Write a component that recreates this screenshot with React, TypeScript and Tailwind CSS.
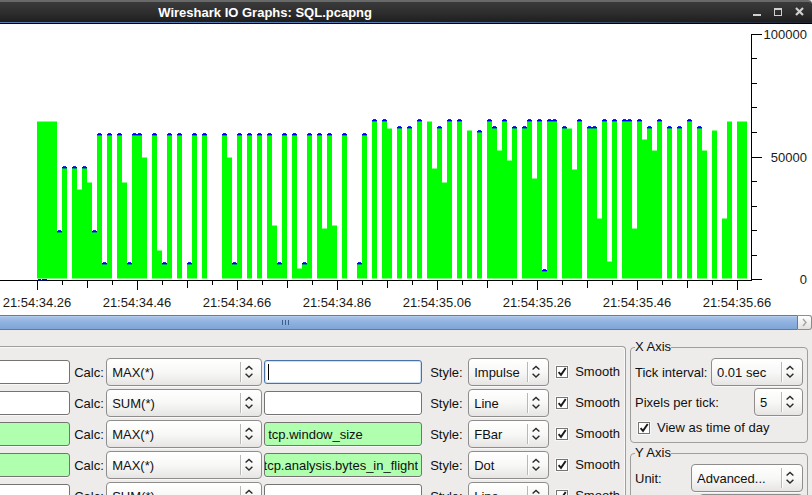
import React, { useId } from "react";

type Sample = { slot: number; top: number; dot: boolean };

// One entry per tick: "-" is an empty tick, a trailing "d" marks a bytes-in-flight dot.
const SERIES =
  "121 121 121 121 231d 167d - 167d 189 167d 182 231d 134d 263d 134d - 134d 182 263d 134d 134d 157 - 134d 250 263d 134d - 134d - 263d 134d - 134d - - - " +
  "134d 157 263d 134d - 134d - 134d - 134d 225 263d 134d - 134d 268 263d 134d - 134d 228 134d 225 - 134d - - 263d 134d - 120d - 120d 128 - 127d - 127d - " +
  "120d - 121 168 127d 182 120d - 120d - 130 - 131d - 120d 127d 150 120d 160 127d - 127d 120d 178 120d 270d 120d 120d - 127d 128 169 120d - 127d 127d 218 " +
  "120d 261 120d - 120d 120d 228 120d 139 127d 150 120d - 127d - 127d - 120d - 127d 150 - 130 - 218 121 - 121 121";

const samples: Sample[] = SERIES.split(" ")
  .map((s, slot) => ({ slot, top: parseInt(s, 10), dot: s.endsWith("d") }))
  .filter((s) => !Number.isNaN(s.top));

const timeLabels = ["34.26", "34.46", "34.66", "34.86", "35.06", "35.26", "35.46", "35.66"];
const xTicks = Array.from({ length: 29 }, (_, i) => i);
const yTicks = [34, 58, 83, 107, 132, 157, 181, 206, 230, 255, 279];

function Graph() {
  return (
    <div className="flex h-[291px] shrink-0 justify-end overflow-hidden bg-white">
      <svg
        width="812"
        height="291"
        viewBox="0 24 812 291"
        className="shrink-0 font-['Liberation_Sans',Arial,sans-serif] text-[13px]"
        shapeRendering="crispEdges"
        role="img"
        aria-label="IO graph"
      >
        {samples.map(({ slot, top, dot }) => {
          const x = 37 + slot * 5;
          return (
            <g key={slot}>
              <rect x={x} y={top} width="5" height={279 - top} fill={dot ? "#00ff00" : "#80ff80"} />
              <rect x={x} y={top + 1} width="5" height={277 - top} fill="#00ff00" />
              <rect x={x} y="278" width="5" height="1" fill="#80ff80" />
              {dot && (
                <>
                  <rect x={x + 1} y={top - 1} width="3" height="1" fill="#2020ff" />
                  <rect x={x} y={top} width="5" height="1" fill="#0000ff" />
                  <rect x={x} y={top + 1} width="5" height="1" fill="#00996a" />
                </>
              )}
            </g>
          );
        })}
        <rect x="0" y="280" width="752" height="1" fill="#000" />
        <rect x="38" y="279" width="3" height="1" fill="#0000ff" />
        <rect x="42" y="279" width="5" height="1" fill="#0000ff" />
        <rect x="38" y="280" width="9" height="1" fill="#000080" />
        <rect x="751" y="34" width="1" height="247" fill="#000" />
        {xTicks.map((i) => (
          <rect key={i} x={37 + i * 25} y="281" width="1" height={i % 4 === 0 ? 9 : i % 2 === 0 ? 7 : 4} fill="#000" />
        ))}
        {yTicks.map((y, i) => (
          <rect key={y} x="751" y={y} width={i % 5 === 0 ? 11 : 6} height="1" fill="#000" />
        ))}
        {timeLabels.map((t, i) => (
          <text key={t} x={37 + i * 100} y="307" textAnchor="middle" fill="#1a1a1a">
            {"21:54:" + t}
          </text>
        ))}
        <text x="807" y="39" textAnchor="end" fill="#1a1a1a">100000</text>
        <text x="807" y="162" textAnchor="end" fill="#1a1a1a">50000</text>
        <text x="807" y="284" textAnchor="end" fill="#1a1a1a">0</text>
      </svg>
    </div>
  );
}

function Combo({ id, value, className, label }: { id?: string; value: string; className: string; label?: string }) {
  return (
    <div className={"relative h-7 shrink-0 " + className}>
      <select
        id={id}
        aria-label={label}
        defaultValue={value}
        className="h-full w-full appearance-none rounded-[4px] border border-[#8e8d8b] bg-linear-to-b from-white via-[#f8f8f7] to-[#e6e5e4] pt-px pl-[5px] text-[13px] text-[#101010] shadow-[0_1px_0_#f8f8f8] outline-none"
      >
        <option>{value}</option>
      </select>
      <svg className="pointer-events-none absolute top-0 right-0" width="24" height="28" viewBox="0 0 24 28" fill="none">
        <path d="M2.5 4v20" stroke="#b9b8b6" />
        <path d="M3.5 4v20" stroke="#ffffff" />
        <path d="M7.6 11.6 11 8.4l3.4 3.2M7.6 15.8 11 19l3.4-3.2" stroke="#2a2a2a" strokeWidth="1.4" />
      </svg>
    </div>
  );
}

function Check({ label }: { label: string }) {
  return (
    <label className="flex shrink-0 items-center gap-[7px] whitespace-nowrap">
      <span className="relative flex h-3 w-3">
        <input
          type="checkbox"
          defaultChecked
          className="h-3 w-3 appearance-none border border-[#757472] bg-white shadow-[0_0_0_1px_#f8f8f8]"
        />
        <svg className="pointer-events-none absolute inset-0" width="12" height="12" viewBox="0 0 12 12" fill="none">
          <path d="M2.6 6.2 5 8.9 9.7 2" stroke="#1a1a1a" strokeWidth="1.9" />
        </svg>
      </span>
      {label}
    </label>
  );
}

const fieldBase = "h-6 rounded-[3px] border text-[13px] text-[#101010] outline-none ";
const whiteField = "border-[#757472] bg-white shadow-[0_1px_0_#f8f8f8]";
const greenField = "border-[#757472] bg-[#afffaf] shadow-[0_1px_0_#f8f8f8]";
const activeField = "border-[#4a72a8] bg-white shadow-[inset_0_0_0_1px_#cfdff2]";

type Row = { calc: string; field: string; style: string; green?: boolean; active?: boolean; scrolled?: boolean };

const rows: Row[] = [
  { calc: "MAX(*)", field: "", style: "Impulse", active: true },
  { calc: "SUM(*)", field: "", style: "Line" },
  { calc: "MAX(*)", field: "tcp.window_size", style: "FBar", green: true },
  { calc: "MAX(*)", field: "tcp.analysis.bytes_in_flight", style: "Dot", green: true, scrolled: true },
  { calc: "SUM(*)", field: "", style: "Line" },
];

function GraphRow({ row }: { row: Row }) {
  const id = useId();
  const tone = row.green ? greenField : whiteField;
  return (
    <div className="flex h-7 shrink-0 items-center">
      <input aria-label="Filter" className={fieldBase + tone + " -ml-2 min-w-0 flex-1"} />
      <label htmlFor={id + "calc"} className="ml-1 w-8 shrink-0 pt-px">Calc:</label>
      <Combo id={id + "calc"} value={row.calc} className="w-[156px]" />
      <div className="relative ml-[2px] flex w-[158px] shrink-0">
        <input
          aria-label="Calc field"
          defaultValue={row.field}
          dir={row.scrolled ? "rtl" : "ltr"}
          className={fieldBase + (row.active ? activeField : tone) + (row.scrolled ? " w-full pr-[3px]" : " w-full px-[3px]")}
        />
        {row.active && <span className="absolute top-1 left-1 h-4 w-px bg-black" />}
      </div>
      <label htmlFor={id + "style"} className="ml-2 w-[38px] shrink-0 pt-px">Style:</label>
      <Combo id={id + "style"} value={row.style} className="mr-[7px] w-[81px]" />
      <Check label="Smooth" />
    </div>
  );
}

function AxisGroup({ title, children }: { title: string; children: React.ReactNode }) {
  return (
    <fieldset className="min-w-0 shrink-0 rounded-[4px] border border-[#9f9e9c] px-1 pb-1">
      <legend className="leading-4">{title}</legend>
      <div className="flex flex-col gap-[2px] pt-[3px]">{children}</div>
    </fieldset>
  );
}

export default function App() {
  return (
    <main className="flex h-screen flex-col overflow-hidden bg-[#edeceb] font-['Liberation_Sans',Arial,sans-serif] text-[13px] leading-4 text-[#101010]">
      <header className="relative flex h-6 shrink-0 items-center rounded-tr-[4px] border-t-2 border-b border-t-[#686a69] border-b-black bg-linear-to-b from-[#3a3a3a] via-[#2e2e2e] to-[#1d1d1d]">
        <h1 className="flex-1 pr-[440px] text-right font-bold whitespace-nowrap text-white">Wireshark IO Graphs: SQL.pcapng</h1>
        <div className="absolute right-[6px] flex gap-2">
          <button aria-label="Minimize" className="h-[13px] w-[13px]">
            <svg width="13" height="13"><path d="M2 8h8v2H2z" fill="#d0d0d0" /></svg>
          </button>
          <button aria-label="Maximize" className="h-[13px] w-[13px]">
            <svg width="13" height="13" shapeRendering="crispEdges">
              <path d="M2 2h8v8H2zM3 4v5h6V4z" fill="#d0d0d0" fillRule="evenodd" />
            </svg>
          </button>
          <button aria-label="Close" className="h-[13px] w-[13px]">
            <svg width="13" height="13"><path d="m3 2 7 7m0-7-7 7" stroke="#d0d0d0" strokeWidth="2.2" /></svg>
          </button>
        </div>
        <div className="absolute right-0 bottom-0 left-0 h-px bg-linear-to-r from-[#557fb5] from-50% to-[#1d2530]" />
      </header>

      <Graph />

      <div className="flex h-[15px] shrink-0">
        <div className="flex flex-1 items-center border-y border-[#5b7ba8] bg-linear-to-b from-[#a9c4e8] via-[#8fb1df] to-[#7ea4d6] shadow-[inset_0_1px_0_#b5cdec]">
          <div className="ml-[35%] flex gap-[2px] pl-[3px]">
            <span className="h-[5px] w-px bg-[#3d5f90]" />
            <span className="h-[5px] w-px bg-[#3d5f90]" />
            <span className="h-[5px] w-px bg-[#3d5f90]" />
          </div>
        </div>
        <button
          aria-label="Scroll right"
          className="flex w-[15px] items-center justify-center rounded-r-[3px] border border-[#8e8d8b] border-l-[#5b7ba8] bg-linear-to-b from-white to-[#e2e1e0]"
        >
          <svg width="7" height="9" fill="none"><path d="m2 1 3 3.5L2 8" stroke="#a5a4a2" strokeWidth="1.4" /></svg>
        </button>
      </div>

      <div className="flex min-h-0 flex-1 gap-1 overflow-hidden pr-1">
        <section className="mt-4 flex min-w-0 flex-1 flex-col gap-[3px] rounded-tr-[4px] border-t border-r border-[#9f9e9c] pt-[11px] pr-[5px] shadow-[inset_-1px_1px_0_#f8f8f8]">
          {rows.map((row, i) => (
            <GraphRow key={i} row={row} />
          ))}
        </section>

        <aside className="flex w-[178px] shrink-0 flex-col gap-[2px] pt-[9px]">
          <AxisGroup title="X Axis">
            <div className="flex items-center justify-between">
              <label htmlFor="tick" className="pt-px whitespace-nowrap">Tick interval:</label>
              <Combo id="tick" value="0.01 sec" className="w-[92px]" />
            </div>
            <div className="flex items-center justify-between">
              <label htmlFor="pixels" className="pt-px">Pixels per tick:</label>
              <Combo id="pixels" value="5" className="w-[49px]" />
            </div>
            <div className="flex h-5 items-center pl-[3px]">
              <Check label="View as time of day" />
            </div>
          </AxisGroup>
          <AxisGroup title="Y Axis">
            <div className="flex items-center justify-between">
              <label htmlFor="unit" className="pt-px">Unit:</label>
              <Combo id="unit" value="Advanced..." className="w-28" />
            </div>
            <div className="flex items-center justify-between">
              <label htmlFor="scale">Scale:</label>
              <Combo id="scale" value="Auto" className="w-[104px]" />
            </div>
          </AxisGroup>
        </aside>
      </div>
    </main>
  );
}
